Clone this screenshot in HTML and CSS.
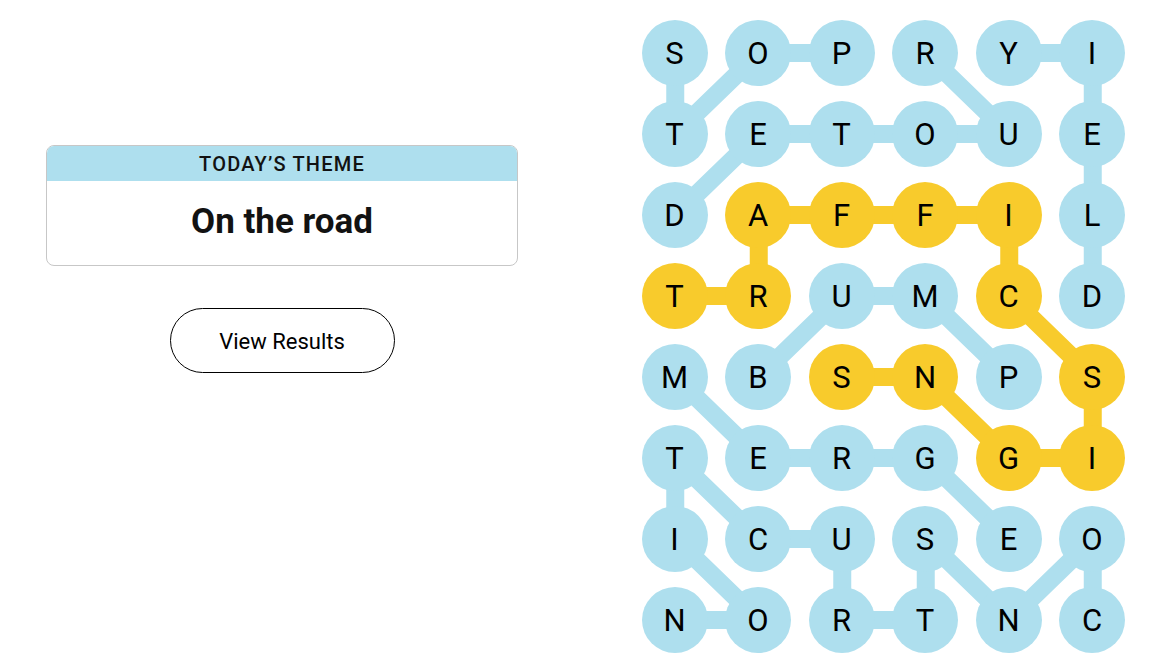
FILE: index.html
```html
<!DOCTYPE html>
<html lang="en">
<head>
  <meta charset="UTF-8" />
  <meta name="viewport" content="width=device-width, initial-scale=1.0" />
  <title>Strands</title>
  <link rel="stylesheet" href="styles.css">
</head>
<body>
  <main class="layout">
    <section class="side">
      <div class="theme-card">
        <div class="theme-label">Today’s Theme</div>
        <div class="theme-name">On the road</div>
      </div>
      <button class="results-btn">View Results</button>
    </section>

    <section class="board">
      <svg class="links" width="484" height="633" viewBox="0 0 483.5 633">
        <g class="link-found">
          <polyline points="33,33 33,114 116.5,33 200,33" />
          <polyline points="33,195 116.5,114 367,114 283.5,33" />
          <polyline points="367,33 450.5,33 450.5,276" />
          <polyline points="116.5,357 200,276 283.5,276 367,357" />
          <polyline points="33,357 116.5,438 283.5,438 367,519" />
          <polyline points="450.5,600 450.5,519 367,600 283.5,519 283.5,600 200,600 200,519 116.5,519 33,438 33,519 116.5,600 33,600" />
        </g>
        <g class="link-span">
          <polyline points="33,276 116.5,276 116.5,195 367,195 367,276 450.5,357 450.5,438 367,438 283.5,357 200,357" />
        </g>
      </svg>
      <div class="letters">
        <span class="cell">S</span><span class="cell">O</span><span class="cell">P</span><span class="cell">R</span><span class="cell">Y</span><span class="cell">I</span>
        <span class="cell">T</span><span class="cell">E</span><span class="cell">T</span><span class="cell">O</span><span class="cell">U</span><span class="cell">E</span>
        <span class="cell">D</span><span class="cell span">A</span><span class="cell span">F</span><span class="cell span">F</span><span class="cell span">I</span><span class="cell">L</span>
        <span class="cell span">T</span><span class="cell span">R</span><span class="cell">U</span><span class="cell">M</span><span class="cell span">C</span><span class="cell">D</span>
        <span class="cell">M</span><span class="cell">B</span><span class="cell span">S</span><span class="cell span">N</span><span class="cell">P</span><span class="cell span">S</span>
        <span class="cell">T</span><span class="cell">E</span><span class="cell">R</span><span class="cell">G</span><span class="cell span">G</span><span class="cell span">I</span>
        <span class="cell">I</span><span class="cell">C</span><span class="cell">U</span><span class="cell">S</span><span class="cell">E</span><span class="cell">O</span>
        <span class="cell">N</span><span class="cell">O</span><span class="cell">R</span><span class="cell">T</span><span class="cell">N</span><span class="cell">C</span>
      </div>
    </section>
  </main>
</body>
</html>
```

FILE: styles.css
```css
body {
  margin: 0;
  font-family: Roboto, 'Liberation Sans', sans-serif;
  background: #fff;
  color: #000;
}
.layout {
  display: flex;
  align-items: flex-start;
  gap: 123.5px;
  padding: 20px 0 0 46px;
}
/* Left column */
.side {
  width: 472px;
  margin-top: 125px;
  display: flex;
  flex-direction: column;
  align-items: center;
}
.theme-card {
  width: 100%;
  box-sizing: border-box;
  border: 1px solid #c7c7c7;
  border-radius: 8px;
  overflow: hidden;
}
.theme-label {
  background: #aedfee;
  height: 35px;
  line-height: 37px;
  text-align: center;
  text-transform: uppercase;
  font-size: 20px;
  font-weight: 500;
  letter-spacing: 1.2px;
  color: #121212;
}
.theme-name {
  height: 84px;
  line-height: 82px;
  text-align: center;
  font-size: 35px;
  font-weight: 700;
  color: #121212;
}
.results-btn {
  margin-top: 42px;
  width: 225px;
  height: 65px;
  padding-top: 3px;
  border: 1px solid #000;
  border-radius: 33px;
  background: #fff;
  font-family: inherit;
  font-size: 22px;
  color: #000;
  cursor: pointer;
}
/* Board */
.board {
  position: relative;
  width: 483.5px;
  height: 633px;
}
.links {
  position: absolute;
  left: 0;
  top: 0;
}
.links polyline {
  fill: none;
  stroke-width: 18;
}
.link-found polyline {
  stroke: #aedfee;
}
.link-span polyline {
  stroke: #f8cb2c;
}
.letters {
  position: relative;
  display: grid;
  grid-template-columns: repeat(6, 66px);
  grid-auto-rows: 66px;
  column-gap: 17.5px;
  row-gap: 15px;
}
.cell {
  border-radius: 50%;
  background: #aedfee;
  display: flex;
  align-items: center;
  justify-content: center;
  font-size: 31px;
  color: #000;
}
.cell.span {
  background: #f8cb2c;
}
```
